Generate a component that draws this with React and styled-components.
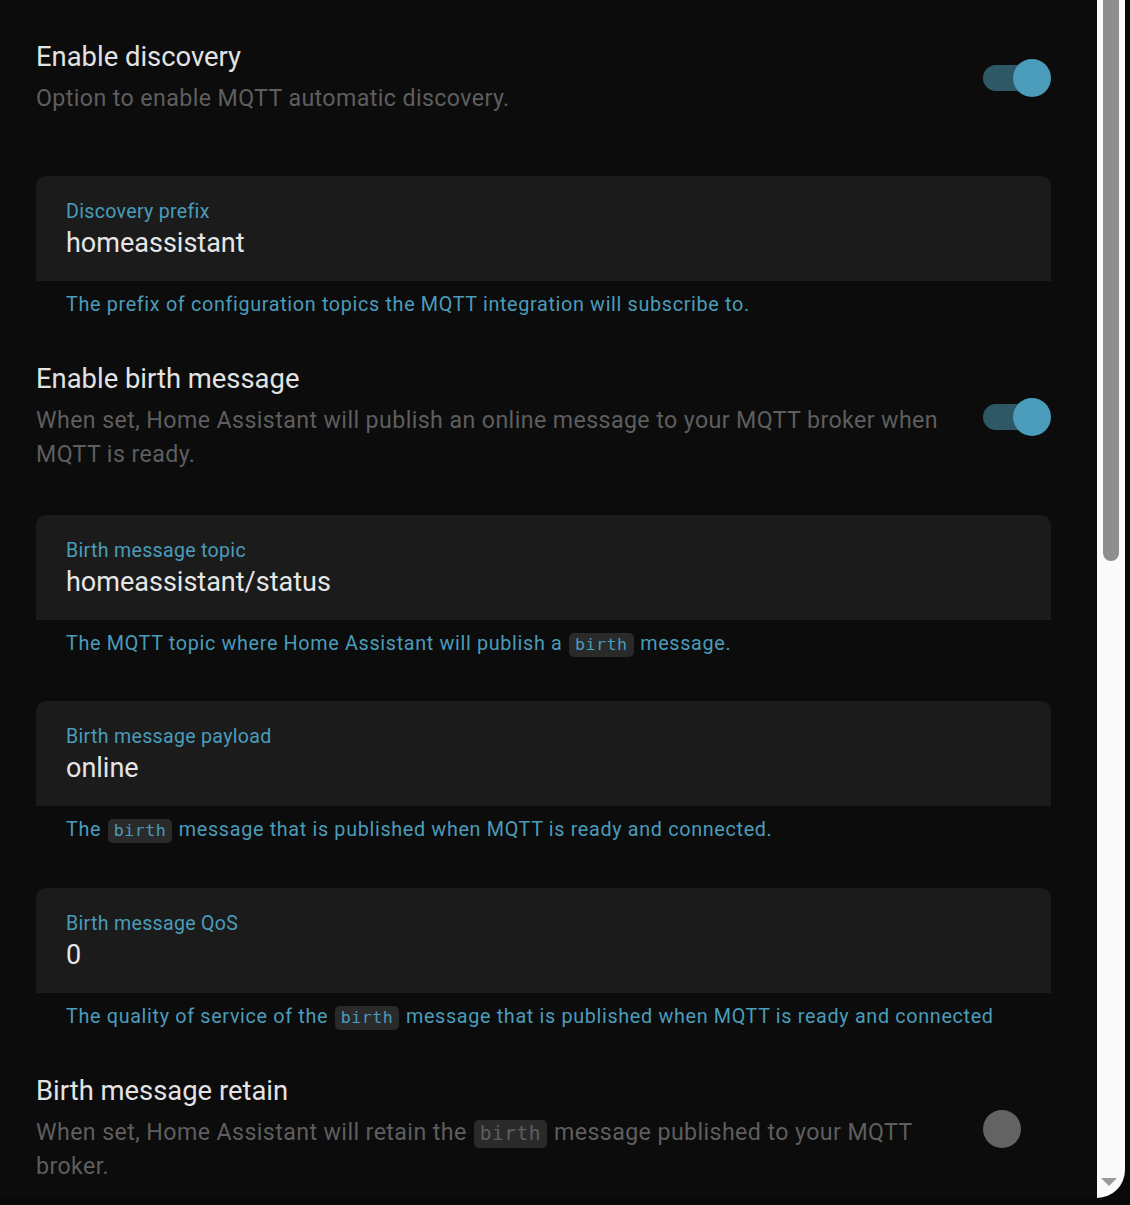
import React from "react";
import styled, { createGlobalStyle } from "styled-components";

const GlobalStyle = createGlobalStyle`
  html, body {
    margin: 0;
    padding: 0;
    background: #080808;
  }
  body {
    font-family: Roboto, "Noto Sans", sans-serif;
    -webkit-font-smoothing: antialiased;
  }
`;

const Page = styled.div`
  width: 1130px;
  height: 1205px;
  display: flex;
  overflow: hidden;
  background: #090909;
`;

const Dialog = styled.div`
  width: 1125px;
  height: 1198px;
  display: flex;
  background: #0c0c0c;
  border-bottom-right-radius: 28px;
  overflow: hidden;
`;

const Content = styled.div`
  flex: 1;
  padding: 40px 46px 0 36px;
  display: flex;
  flex-direction: column;
`;

const Scrollbar = styled.div`
  width: 28px;
  background: #fafafa;
  position: relative;
  display: flex;
  justify-content: center;
`;

const Thumb = styled.div`
  width: 16px;
  height: 561px;
  background: #8e8e8e;
  border-radius: 0 0 8px 8px;
`;

const ArrowDown = styled.div`
  position: absolute;
  bottom: 12px;
  left: 4px;
  width: 0;
  height: 0;
  border-left: 8px solid transparent;
  border-right: 8px solid transparent;
  border-top: 8px solid #9a9a9a;
`;

const Row = styled.div`
  display: flex;
  align-items: center;
  gap: 40px;
  margin-bottom: ${(p) => p.$mb || 0}px;
`;

const RowText = styled.div`
  flex: 1;
`;

const Title = styled.div`
  font-size: 27.4px;
  line-height: 34px;
  color: #e3e3e3;
`;

const Desc = styled.div`
  font-size: 23.2px;
  line-height: 34px;
  letter-spacing: 0.4px;
  color: #5e5e5e;
  margin-top: 7px;
`;

const Switch = styled.div`
  width: 68px;
  height: 38px;
  position: relative;
  flex-shrink: 0;
`;

const Track = styled.div`
  position: absolute;
  left: 0;
  right: 16px;
  top: 6px;
  height: 26px;
  border-radius: 13px;
  background: ${(p) => (p.$on ? "#2f5866" : "transparent")};
`;

const Knob = styled.div`
  position: absolute;
  top: 0;
  left: ${(p) => (p.$on ? "30px" : "0")};
  width: 38px;
  height: 38px;
  border-radius: 50%;
  background: ${(p) => (p.$on ? "#4a9cba" : "#636363")};
`;

const Field = styled.div`
  height: 105px;
  box-sizing: border-box;
  background: #1b1b1b;
  border-radius: 10px 10px 0 0;
  padding: 22px 30px 0;
`;

const Label = styled.div`
  font-size: 19.6px;
  line-height: 28px;
  letter-spacing: 0.3px;
  color: #4a9cba;
`;

const Value = styled.div`
  font-size: 27px;
  line-height: 34px;
  color: #e6e6e6;
`;

const Helper = styled.div`
  padding: 10px 30px 0;
  font-size: 19.8px;
  line-height: 28px;
  letter-spacing: 0.66px;
  color: #4a9cba;
  margin-bottom: ${(p) => p.$mb || 0}px;
`;

const Code = styled.code`
  display: inline-block;
  font-family: "DejaVu Sans Mono", "Liberation Mono", monospace;
  font-size: 0.84em;
  line-height: 1.45;
  letter-spacing: 0.5px;
  background: #2a2a2a;
  border-radius: 5px;
  padding: 0 6px;
  margin: 0 1px;
  color: inherit;
`;

const Toggle = ({ on }) => (
  <Switch>
    <Track $on={on} />
    <Knob $on={on} />
  </Switch>
);

const TextField = ({ label, value, helper, mb }) => (
  <>
    <Field>
      <Label>{label}</Label>
      <Value>{value}</Value>
    </Field>
    <Helper $mb={mb}>{helper}</Helper>
  </>
);

const App = () => {
  return (
    <>
      <GlobalStyle />
      <Page>
        <Dialog>
          <Content>
            <Row $mb={61}>
              <RowText>
                <Title>Enable discovery</Title>
                <Desc>Option to enable MQTT automatic discovery.</Desc>
              </RowText>
              <Toggle on />
            </Row>

            <TextField
              label="Discovery prefix"
              value="homeassistant"
              helper="The prefix of configuration topics the MQTT integration will subscribe to."
              mb={43}
            />

            <Row $mb={44}>
              <RowText>
                <Title>Enable birth message</Title>
                <Desc>
                  When set, Home Assistant will publish an online message to
                  your MQTT broker when MQTT is ready.
                </Desc>
              </RowText>
              <Toggle on />
            </Row>

            <TextField
              label="Birth message topic"
              value="homeassistant/status"
              helper={
                <>
                  The MQTT topic where Home Assistant will publish a{" "}
                  <Code>birth</Code> message.
                </>
              }
              mb={43}
            />

            <TextField
              label="Birth message payload"
              value="online"
              helper={
                <>
                  The <Code>birth</Code> message that is published when MQTT is
                  ready and connected.
                </>
              }
              mb={44}
            />

            <TextField
              label="Birth message QoS"
              value="0"
              helper={
                <>
                  The quality of service of the <Code>birth</Code> message that
                  is published when MQTT is ready and connected
                </>
              }
              mb={43}
            />

            <Row>
              <RowText>
                <Title>Birth message retain</Title>
                <Desc>
                  When set, Home Assistant will retain the <Code>birth</Code>{" "}
                  message published to your MQTT broker.
                </Desc>
              </RowText>
              <Toggle />
            </Row>
          </Content>
          <Scrollbar>
            <Thumb />
            <ArrowDown />
          </Scrollbar>
        </Dialog>
      </Page>
    </>
  );
};

export default App;
